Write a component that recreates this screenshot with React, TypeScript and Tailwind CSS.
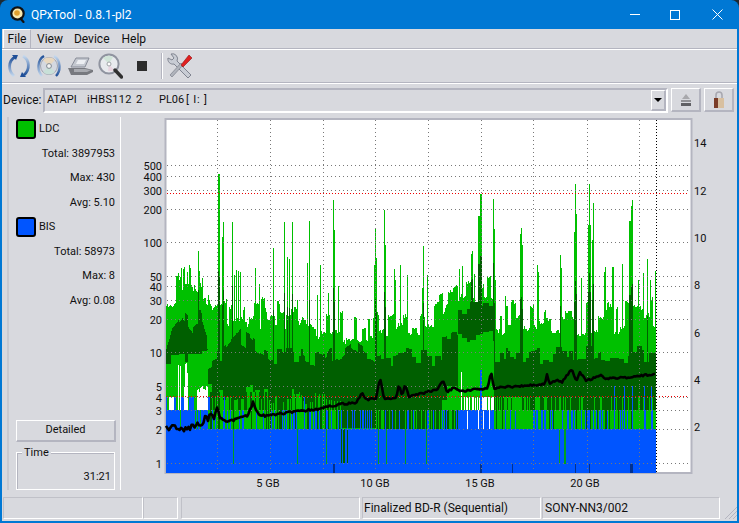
import React from 'react';

const FONT = 'Roboto, "Liberation Sans", sans-serif';

// y positions of the log scale on the chart
const yTicks: [string, number][] = [
  ['500', 165], ['400', 176], ['300', 190], ['200', 209], ['100', 242], ['50', 276], ['40', 286],
  ['30', 300], ['20', 319], ['10', 352], ['5', 386], ['4', 397], ['3', 410], ['2', 429], ['1', 463],
];
const rightTicks: [string, number][] = [['14', 142], ['12', 190], ['10', 237], ['8', 284], ['6', 332], ['4', 379], ['2', 426]];
const xTicks: [string, number][] = [['5 GB', 268], ['10 GB', 375], ['15 GB', 480], ['20 GB', 585]];
const xGrid = [217, 270, 323, 375, 428, 481, 533, 587, 639];

const lightTable: [number, number][] = [
  [166, 300], [175, 295], [181, 278], [187, 275], [193, 282], [198, 292], [205, 300], [212, 322], [225, 316],
  [240, 312], [270, 316], [300, 320], [340, 328], [360, 336], [375, 326], [400, 318], [430, 318], [442, 305],
  [458, 300], [462, 290], [492, 288], [496, 318], [530, 318], [570, 318], [610, 320], [656, 310],
];
const darkTop: [number, number][] = [
  [166, 345], [172, 325], [182, 312], [192, 325], [200, 318], [207, 340], [208, 360], [225, 352], [240, 335],
  [252, 345], [270, 356], [300, 356], [322, 360], [340, 352], [350, 345], [375, 360], [400, 356], [430, 358],
  [441, 358], [442, 335], [457, 333], [458, 308], [493, 308], [494, 356], [656, 354],
];
// dark band bottom holds until the next x
const darkBottom: [number, number][] = [
  [166, 358], [208, 392], [270, 395], [300, 400], [341, 428], [376, 410], [442, 392], [458, 335], [494, 397], [656, 397],
];
const spikes: [number, number][] = [
  [181, 268], [183, 269], [184, 267], [187, 272], [198, 251], [199, 271], [202, 278], [218, 174], [219, 174], [222, 237],
  [223, 222], [232, 222], [234, 275], [236, 270], [238, 271], [240, 272], [255, 268], [259, 284], [273, 248], [284, 222],
  [287, 257], [289, 259], [292, 222], [297, 300], [307, 263], [309, 221], [317, 295], [320, 265], [328, 293], [333, 200],
  [334, 230], [338, 286], [374, 265], [375, 229], [376, 258], [384, 210], [385, 245], [394, 269], [395, 280], [400, 265],
  [407, 275], [422, 288], [423, 246], [427, 275], [459, 269], [462, 266], [471, 254], [472, 251], [474, 274], [478, 216],
  [479, 216], [480, 194], [481, 194], [493, 199], [494, 229], [495, 280], [505, 296], [521, 228], [522, 245], [520, 234],
  [537, 265], [538, 272], [560, 255], [561, 268], [574, 232], [575, 184], [576, 214], [581, 278], [588, 225], [589, 184],
  [590, 225], [592, 240], [593, 203], [604, 272], [605, 267], [612, 267], [613, 267], [622, 264], [629, 221], [630, 221],
  [631, 206], [632, 200], [638, 280], [643, 273], [647, 259], [650, 280], [655, 271],
];
const greenLines = [233, 297, 326, 378, 386, 405, 426, 559, 564, 565];
const darkGreenLines = [341, 343, 344, 347];
const darkBlue = [333, 334, 480, 481, 512, 575, 589, 630, 631, 632];
const blackLine: [number, number][] = [
  [166, 424], [169, 430], [172, 425], [176, 428], [181, 430], [190, 428], [196, 425], [202, 424], [206, 416],
  [208, 421], [211, 412], [214, 418], [217, 406], [220, 419], [224, 422], [234, 420], [242, 417], [247, 416],
  [251, 408], [253, 401], [256, 410], [260, 415], [268, 416], [285, 413], [300, 411], [318, 409], [330, 406],
  [342, 404], [355, 403], [360, 398], [362, 392], [366, 400], [376, 398], [380, 378], [384, 399], [396, 398],
  [399, 385], [402, 396], [405, 384], [409, 397], [420, 394], [428, 392], [437, 390], [443, 380], [447, 392],
  [453, 388], [460, 391], [466, 391], [474, 389], [482, 389], [488, 388], [491, 371], [494, 388], [505, 387],
  [520, 386], [535, 385], [545, 384], [547, 375], [550, 384], [556, 380], [562, 382], [566, 376], [572, 369],
  [576, 381], [580, 373], [586, 380], [592, 379], [600, 375], [606, 379], [620, 378], [640, 376], [656, 374],
];

function interp(table: [number, number][], x: number) {
  for (let i = 1; i < table.length; i++) {
    if (x <= table[i][0]) {
      const [x0, y0] = table[i - 1];
      const [x1, y1] = table[i];
      return y0 + ((y1 - y0) * (x - x0)) / (x1 - x0);
    }
  }
  return table[table.length - 1][1];
}

function step(table: [number, number][], x: number) {
  let v = table[0][1];
  for (const [tx, ty] of table) if (x >= tx) v = ty;
  return v;
}

function buildColumns() {
  let seed = 4711;
  const rnd = () => {
    seed = (seed * 16807) % 2147483647;
    return seed / 2147483647;
  };
  let light = '';
  let dark = '';
  let blue = '';
  let white = '';
  const spikeMap = new Map(spikes);
  let hold = 0;
  let topNoise = 0;
  let darkHold = 0;
  let darkNoise = 0;
  let bottomNoise = 0;
  for (let x = 166; x < 656; x++) {
    const px = x + 0.5;
    if (hold-- <= 0) {
      hold = 1 + Math.floor(rnd() * 4);
      topNoise = (rnd() - 0.5) * 34;
    }
    if (darkHold-- <= 0) {
      darkHold = 1 + Math.floor(rnd() * 5);
      darkNoise = (rnd() - 0.5) * 18;
      bottomNoise = (rnd() - 0.5) * 16;
    }
    let top = interp(lightTable, x) + topNoise + (rnd() - 0.5) * 4;
    const sp = spikeMap.get(x);
    if (sp) top = sp;
    light += `M${px} ${top.toFixed(0)}V429`;

    const dt = interp(darkTop, x) + darkNoise;
    // the bottoms of the 4-level bands stay flat, the others are ragged
    const base = step(darkBottom, x);
    const db = base === 397 || base === 410 || base === 428 ? base : base + bottomNoise;
    dark += `M${px} ${dt.toFixed(0)}V${db.toFixed(0)}`;
    if (sp && sp < 262) dark += `M${px} ${(sp + (dt - sp) * 0.55).toFixed(0)}V${dt.toFixed(0)}`;

    // lower stripes between the 4 and 2 levels
    if (x >= 208 && x < 340 && rnd() < 0.42) dark += `M${px} 392V${rnd() < 0.5 ? 410 : 429}`;
    if (x >= 376 && x < 458 && rnd() < 0.72) dark += `M${px} 410V429`;
    if (x >= 494 && x < 530 && rnd() < 0.35) dark += `M${px} 397V${rnd() < 0.3 ? 429 : 410}`;
    if (x >= 530 && rnd() < 0.7) dark += `M${px} 397V${rnd() < 0.15 ? 429 : 410}`;

    let blueTop = 429;
    if (x < 208) blueTop = rnd() < 0.92 ? 410 : 429;
    else if (x < 340) blueTop = rnd() < 0.22 ? 410 : rnd() < 0.05 ? 397 : 429;
    else if (x < 458) blueTop = rnd() < 0.2 ? 410 : 429;
    else if (x < 494) blueTop = 410;
    else if (x < 530) blueTop = rnd() < 0.1 ? 410 : 429;
    else blueTop = rnd() < 0.3 ? 410 : rnd() < 0.06 ? 386 : 429;
    if (x === 480 || x === 481) blueTop = 370;
    if (x >= 166 && x < 210 && x % 9 < 5) blue += `M${px} 397V410`;
    blue += `M${px} ${blueTop}V473`;

    if (x >= 177 && x < 188 && rnd() < 0.8) white += `M${px} ${(362 + rnd() * 30).toFixed(0)}V410`;
    if (x >= 197 && x < 208) white += `M${px} ${(386 + rnd() * 6).toFixed(0)}V410`;
    if (x > 168 && x < 177 && rnd() < 0.5) white += `M${px} 397V410`;
    if (x >= 461 && x < 494 && x !== 480 && x !== 481) {
      if (rnd() < 0.1) white += `M${px} 372V410`;
      else if (rnd() < 0.55) white += `M${px} 397V410`;
      if (rnd() < 0.1) white += `M${px} 410V429`;
    }
  }
  // black trace with some sample jitter, rougher at the start of the disc
  const pts: string[] = [];
  for (let x = 166; x <= 656; x += 1.5) {
    const y = interp(blackLine, x) + (rnd() - 0.5) * (x < 225 ? 5 : 2);
    pts.push(`${x},${y.toFixed(1)}`);
  }
  let lines = '';
  greenLines.forEach((x) => (lines += `M${x + 0.5} 429V464`));
  let darkLines = '';
  darkGreenLines.forEach((x) => (darkLines += `M${x + 0.5} 429V463`));
  let navy = '';
  darkBlue.forEach((x) => (navy += `M${x + 0.5} 464V473`));
  return { light, dark, blue, white, lines, darkLines, navy, trace: pts.join(' ') };
}

const columns = buildColumns();

function Chart() {
  return (
    <svg width="617" height="382" viewBox="121 113 617 382" className="block" style={{ fontFamily: FONT }}>
      <rect x="165.5" y="119" width="526" height="354" fill="#ffffff" stroke="#b4b5c0" strokeWidth="2" />
      <g strokeWidth="1" shapeRendering="crispEdges" fill="none">
        <path d={columns.light} stroke="#00c000" />
        <path d={columns.dark} stroke="#005f00" />
        <path d={columns.blue} stroke="#0055ff" />
        <path d={columns.white} stroke="#ffffff" />
        <path d={columns.lines} stroke="#00a020" />
        <path d={columns.darkLines} stroke="#005f00" />
        <path d={columns.navy} stroke="#003090" />
      </g>
      <g stroke="#787878" strokeWidth="1" strokeDasharray="1 3" shapeRendering="crispEdges" fill="none">
        {yTicks.map(([t, y]) => (
          <path key={t} d={`M167 ${y + 0.5}H689`} />
        ))}
        {xGrid.map((x) => (
          <path key={x} d={`M${x + 0.5} 120V472`} />
        ))}
      </g>
      <path d="M167 193.5H689M167 396.5H689" stroke="#f00000" strokeDasharray="1 2" shapeRendering="crispEdges" />
      <path d="M656.5 120V472" stroke="#000000" strokeDasharray="1 2" shapeRendering="crispEdges" />
      <polyline points={columns.trace} fill="none" stroke="#000000" strokeWidth="2.6" strokeLinejoin="round" />
      <g fontSize="11" fill="#101010">
        {yTicks.map(([t, y]) => (
          <text key={t} x="162" y={y + 5} textAnchor="end">{t}</text>
        ))}
        {rightTicks.map(([t, y]) => (
          <text key={t} x="694" y={y + 5}>{t}</text>
        ))}
        {xTicks.map(([t, x]) => (
          <text key={t} x={x} y="487" textAnchor="middle">{t}</text>
        ))}
      </g>
    </svg>
  );
}

function AppIcon() {
  return (
    <svg width="16" height="17" viewBox="0 0 16 17">
      <circle cx="7.5" cy="7.5" r="6.2" fill="#f8e8b0" stroke="#111" strokeWidth="2.2" />
      <circle cx="7" cy="7" r="2.8" fill="#e0a030" />
      <path d="M10.5 12.5l3 3.5" stroke="#111" strokeWidth="2.2" strokeLinecap="round" />
    </svg>
  );
}

function ToolbarIcons() {
  return (
    <>
      <svg width="24" height="24" viewBox="0 0 24 24" className="ml-[5px]">
        <defs>
          <linearGradient id="arcL" x1="0" y1="0" x2="0" y2="1"><stop offset="0" stopColor="#1f4f98" /><stop offset="1" stopColor="#c4d8ee" /></linearGradient>
          <linearGradient id="arcR" x1="0" y1="1" x2="0" y2="0"><stop offset="0" stopColor="#1f4f98" /><stop offset="1" stopColor="#c4d8ee" /></linearGradient>
        </defs>
        <path d="M8 3C1 7 1 17 7 22" fill="none" stroke="url(#arcL)" strokeWidth="2.8" />
        <path d="M16 2c7 4 7 14 1 19" fill="none" stroke="url(#arcR)" strokeWidth="2.8" />
        <path d="M5 1l6 0-2 5zM19 23l-6 0 2-5z" fill="#1f4f98" />
      </svg>
      <svg width="24" height="24" viewBox="0 0 24 24" className="ml-[6px]">
        <circle cx="12" cy="12" r="8.5" fill="#d4d8e0" stroke="#a0a4b0" />
        <path d="M12 12L6 6A8.5 8.5 0 0 1 18 6z" fill="#e8d8c0" />
        <path d="M12 12L18 18A8.5 8.5 0 0 1 6 18z" fill="#c8e0d8" />
        <circle cx="12" cy="12" r="2.4" fill="#f4f4f4" stroke="#808890" />
        <path d="M7 2C0 6 0 17 5 22" fill="none" stroke="url(#arcL)" strokeWidth="2.4" />
        <path d="M17 2c7 4 7 15 2 20" fill="none" stroke="url(#arcR)" strokeWidth="2.4" />
      </svg>
      <svg width="25" height="18" viewBox="0 0 25 18" className="ml-[7px]">
        <path d="M3 10L8 1h13l-4 9z" fill="#c4c8d0" stroke="#888c98" />
        <path d="M10 3h8l-2 4H8z" fill="#eceef2" />
        <path d="M0 11h17l8 2v2l-6 3H3z" fill="#77797f" />
        <path d="M6 12h11l6 1-4 2H6z" fill="#a8aab0" />
      </svg>
      <svg width="25" height="26" viewBox="0 0 25 26" className="ml-[5px]">
        <circle cx="11" cy="11" r="9.6" fill="#e8eaee" stroke="#9094a0" strokeWidth="2" />
        <path d="M11 11L5 5a8.5 8.5 0 0 1 10-1z" fill="#d0e4d8" />
        <path d="M11 11l5 6a8 8 0 0 1-6 1z" fill="#e8d4e0" />
        <circle cx="11" cy="11" r="2" fill="#fff" stroke="#a0a4a8" />
        <path d="M17 17l6.5 7" stroke="#303030" strokeWidth="3.4" strokeLinecap="round" />
      </svg>
      <div className="mx-[14px] size-[10px] bg-[#2c2c2c]" />
      <div className="h-[26px] w-[2px] border-l border-[#b4b5c0] bg-white" />
      <svg width="26" height="26" viewBox="0 0 26 26" className="ml-[4px]">
        <path d="M1 5a5 5 0 0 0 6 6l14 14 3-3L10 8A5 5 0 0 0 4 1l3 4-2 2z" fill="#c8ccd4" stroke="#808490" />
        <path d="M14 10L3 22l2 2 11-12z" fill="#b0b4bc" stroke="#707480" strokeWidth="0.6" />
        <path d="M14 12L22 2l3 3-9 9z" fill="#e02020" stroke="#901010" strokeWidth="0.6" />
      </svg>
    </>
  );
}

function Stat({ label, value }: { label: string; value: string }) {
  return (
    <div className="h-[24.5px] pr-[5px] text-right leading-[24.5px]">
      {label}: {value}
    </div>
  );
}

function Legend({ color, name }: { color: string; name: string }) {
  return (
    <div className="flex h-[24.5px] items-center gap-[3px]">
      <div className={`size-[20px] rounded-[3px] border-2 border-black ${color}`} />
      <span>{name}</span>
    </div>
  );
}

const raised = 'border border-r-2 border-b-2 border-t-white border-r-[#b4b5c0] border-b-[#b4b5c0] border-l-white';
const sunken = 'border border-t-[#c0c1c8] border-r-white border-b-white border-l-[#c0c1c8]';

export default function App() {
  return (
    <div className="h-[523px] w-[739px] overflow-hidden bg-[#1c2a34] text-[12px] text-[#101010]" style={{ fontFamily: FONT }}>
      <div className="flex h-[523px] flex-col rounded-t-[8px] bg-[#0078d4] px-[2px] pb-[2px]">
        <div className="flex h-[29px] shrink-0 items-center text-white">
          <div className="ml-[8px] w-[21px]"><AppIcon /></div>
          <span>QPxTool - 0.8.1-pl2</span>
          <div className="ml-auto flex items-center pr-[14px]">
            <div className="mr-[30px] h-px w-[10px] bg-white" />
            <div className="mr-[32px] size-[10px] border border-white" />
            <svg width="11" height="11" viewBox="0 0 11 11"><path d="M.5.5l10 10M10.5.5l-10 10" stroke="#fff" /></svg>
          </div>
        </div>

        <div className="flex min-h-0 flex-1 flex-col bg-[#d8d9de]">
          <div className="flex h-[20px] shrink-0 items-center border-b border-[#b4b5c0] pl-[1px]">
            <div className="flex h-[19px] w-[28px] items-center justify-center border-t border-r border-l border-t-white border-r-[#b4b5c0] border-l-white">File</div>
            <span className="ml-[6px]">View</span>
            <span className="ml-[11px]">Device</span>
            <span className="ml-[12px]">Help</span>
          </div>
          <div className="flex h-[34px] shrink-0 items-center border-t border-b border-t-white border-b-[#b4b5c0]">
            <ToolbarIcons />
          </div>
          <div className="flex h-[30px] shrink-0 items-center border-t border-white pt-[3px] pl-[1px]">
            <span className="w-[40px]">Device:</span>
            <div className="flex h-[25px] w-[625px] items-center border-2 border-t-[#b4b5c0] border-r-white border-b-white border-l-[#b4b5c0] pl-[2px] text-[11px]">
              <span className="w-[40px]">ATAPI</span>
              <span className="w-[49px] tracking-[0.35px]">iHBS112</span>
              <span className="w-[23px]">2</span>
              <span className="w-[27px]">PL06</span>
              <span className="tracking-[0.8px]">[ I: ]</span>
              <div className={`ml-auto flex h-[21px] w-[15px] items-center justify-center ${raised}`}>
                <div className="h-0 w-0 border-x-[4px] border-t-[4px] border-x-transparent border-t-black" />
              </div>
            </div>
            <div className={`ml-[3px] flex h-[24px] w-[30px] items-center justify-center ${raised}`}>
              <svg width="12" height="12" viewBox="0 0 12 12"><path d="M6 0l4 5H2z" fill="#a8a8ac" /><path d="M1 6h10v2H1z" fill="#909094" /><path d="M1 9h10v3H1z" fill="#606064" /></svg>
            </div>
            <div className={`ml-[3px] flex h-[24px] w-[30px] items-center justify-center ${raised}`}>
              <svg width="12" height="17" viewBox="0 0 12 17"><path d="M3 8V4a3 3 0 0 1 6 0v4" fill="none" stroke="#a8a8b0" strokeWidth="1.6" /><path d="M1 7h10v10H1z" fill="#d8c0a0" /><path d="M1 7h4v10H1z" fill="#7a3c28" /></svg>
            </div>
          </div>

          <div className="flex min-h-0 flex-1">
            <div className="mt-[4px] ml-[5px] flex h-[373px] w-[114px] shrink-0 flex-col border-r border-l-2 border-r-white border-l-[#c8c9d0] pl-[7px] text-[11px]">
              <Legend color="bg-[#00c000]" name="LDC" />
              <Stat label="Total" value="3897953" />
              <Stat label="Max" value="430" />
              <Stat label="Avg" value="5.10" />
              <Legend color="bg-[#0055ff]" name="BIS" />
              <Stat label="Total" value="58973" />
              <Stat label="Max" value="8" />
              <Stat label="Avg" value="0.08" />
              <div className="mt-auto pr-[5px]">
                <div className={`flex h-[22px] w-[100px] items-center justify-center ${raised}`}>Detailed</div>
                <div className="relative mt-[10px] h-[38px] w-[99px] border border-white shadow-[inset_1px_1px_0_#b4b5c0]">
                  <span className="absolute -top-[7px] left-[5px] bg-[#d8d9de] px-[2px] leading-[14px]">Time</span>
                  <div className="pt-[16px] pr-[3px] text-right leading-[16px]">31:21</div>
                </div>
              </div>
            </div>
            <div className="min-w-0">
              <Chart />
            </div>
          </div>

          <div className="flex h-[24px] shrink-0 items-stretch pb-[2px] pl-[1px]">
            <div className={`w-[140px] ${sunken}`} />
            <div className={`w-[35px] ${sunken}`} />
            <div className={`ml-[3px] w-[179px] ${sunken}`} />
            <div className={`ml-[2px] flex w-[179px] items-center pl-[1px] ${sunken}`}>Finalized BD-R (Sequential)</div>
            <div className={`ml-[1px] flex w-[178px] items-center pl-[2px] ${sunken}`}>SONY-NN3/002</div>
            <svg width="14" height="14" viewBox="0 0 14 14" className="mt-auto ml-auto"><path d="M2 14L14 2M6 14l8-8M10 14l4-4" stroke="#b4b5c0" /></svg>
          </div>
        </div>
      </div>
    </div>
  );
}
